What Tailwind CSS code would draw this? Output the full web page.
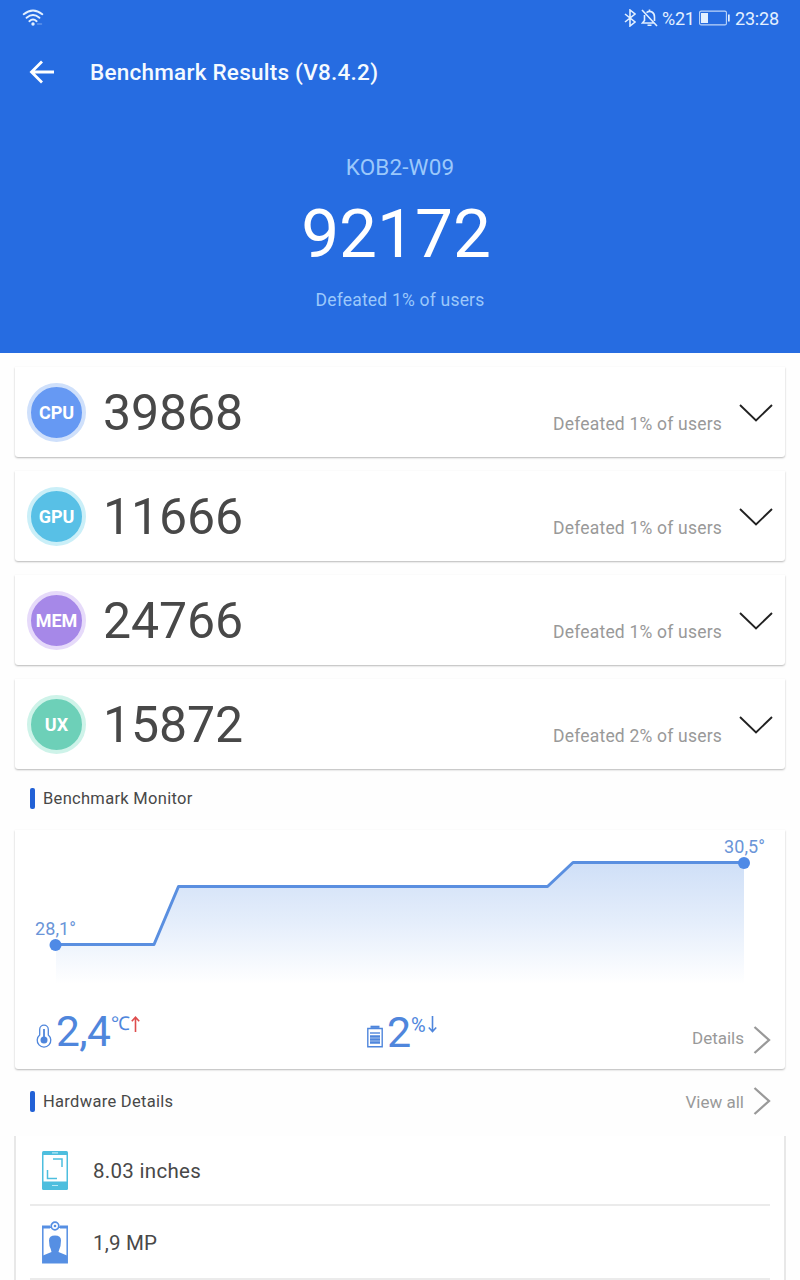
<!DOCTYPE html>
<html lang="en">
<head>
<meta charset="utf-8">
<title>Benchmark Results</title>
<script src="https://cdn.jsdelivr.net/npm/@tailwindcss/browser@4"></script>
</head>
<body class="w-[800px] h-[1280px] overflow-hidden bg-[#fefefe] font-['Roboto',sans-serif] text-[#484848]">
<header class="h-[353px] bg-[#266ce1] text-white flex flex-col">
  <div class="h-9 flex items-center justify-between pl-[22px] pr-[21px] text-[#e3f0ff]">
    <svg class="w-[22px] h-[18px]" viewBox="0 0 22 18" fill="none" stroke="currentColor" stroke-width="1.9" stroke-linecap="round"><path d="M1.700 5.200Q11 -2.400 20.300 5.200M4.600 8.800Q11 3.400 17.400 8.800M7.400 12.200Q11 9 14.600 12.200"/><circle cx="11" cy="15" r="1.700" fill="currentColor" stroke="none"/><path d="M15.500 15h4" stroke-width="1.500" opacity=".3"/></svg>
    <div class="flex items-center h-full text-[18px] leading-9">
      <svg class="w-[12px] h-[18px] mr-[5px]" viewBox="0 0 12 18" fill="none" stroke="currentColor" stroke-width="1.600"><path d="M1 5l10 8-5 4V1l5 4L1 13"/></svg>
      <svg class="w-[17px] h-[18px] mr-[4px]" viewBox="0 0 17 18" fill="none" stroke="currentColor" stroke-width="1.600"><path d="M1 1l15 16M5.500 3.600C9.500 .7 13.500 3.500 13.500 8v4M3.500 6v5.500L1.500 14h11.500M6.500 16.300h4M8.500 2.200V.5"/></svg>
      <span class="w-[32px] whitespace-nowrap pt-[2px] tracking-[-0.3px]">%21</span>
      <svg class="w-[31px] h-[16px] ml-[5px] mr-[5px]" viewBox="0 0 31 16"><rect x=".6" y="1.100" width="26.800" height="13.800" rx="1.500" fill="none" stroke="currentColor" stroke-width="1.100" opacity=".8"/><path d="M2 3h7v10H2z" fill="currentColor"/><path d="M29 4.500h1.700v7H29z" fill="currentColor"/></svg>
      <span class="w-[44px] whitespace-nowrap pt-[2px] tracking-[-0.2px]">23:28</span>
    </div>
  </div>
  <div class="h-[73px] flex items-center pl-[29px]">
    <svg class="-mt-[2px] w-[26px] h-[24px]" viewBox="0 0 26 24" fill="none" stroke="currentColor" stroke-width="2.800"><path d="M13 1.500L2.500 12 13 22.500M2.500 12H25"/></svg>
    <h1 class="ml-[35px] pt-px font-medium text-[22.500px] tracking-[0.240px] text-[#f4faff] whitespace-nowrap">Benchmark Results (V8.4.2)</h1>
  </div>
  <div class="flex flex-col items-center">
    <div class="mt-[43px] h-[30px] leading-[31px] text-[22.500px] tracking-[0.150px] text-[#9bc8fb]">KOB2-W09</div>
    <div class="mt-[12px] h-[80px] leading-[80px] text-[67.500px] -translate-x-1">92172</div>
    <div class="mt-[14px] h-6 leading-6 text-[17.500px] tracking-[0.200px] text-[#9bc8fb]">Defeated 1% of users</div>
  </div>
</header>
<main class="px-[15px]">
  <section class="pt-[14px] flex flex-col gap-[14px]">
    <div class="h-[90px] bg-white rounded-b-[3px] shadow-[0_1px_2px_rgba(0,0,0,0.28)] flex items-center pl-[12px] pr-[12px]">
      <div class="size-[59px] rounded-full border-[4.500px] border-[#cfe0fb] bg-[#6699f3] flex items-center justify-center text-white font-bold text-[18px]">CPU</div>
      <div class="ml-[17px] pt-[2px] text-[50px] tracking-[-0.100px] leading-none flex-1">39868</div>
      <div class="pt-[24px] text-[17.500px] tracking-[0.200px] text-[#999]">Defeated 1% of users</div>
      <svg class="ml-[17px] mt-[2px] w-[34px] h-[18px]" viewBox="0 0 34 18" fill="none" stroke="#222" stroke-width="1.900"><path d="M1 1l16 15.500L33 1"/></svg>
    </div>
    <div class="h-[90px] bg-white rounded-b-[3px] shadow-[0_1px_2px_rgba(0,0,0,0.28)] flex items-center pl-[12px] pr-[12px]">
      <div class="size-[59px] rounded-full border-[4.500px] border-[#caeff8] bg-[#58c0e6] flex items-center justify-center text-white font-bold text-[18px]">GPU</div>
      <div class="ml-[17px] pt-[2px] text-[50px] tracking-[-0.100px] leading-none flex-1">11666</div>
      <div class="pt-[24px] text-[17.500px] tracking-[0.200px] text-[#999]">Defeated 1% of users</div>
      <svg class="ml-[17px] mt-[2px] w-[34px] h-[18px]" viewBox="0 0 34 18" fill="none" stroke="#222" stroke-width="1.900"><path d="M1 1l16 15.500L33 1"/></svg>
    </div>
    <div class="h-[90px] bg-white rounded-b-[3px] shadow-[0_1px_2px_rgba(0,0,0,0.28)] flex items-center pl-[12px] pr-[12px]">
      <div class="size-[59px] rounded-full border-[4.500px] border-[#e6dafa] bg-[#a688e8] flex items-center justify-center text-white font-bold text-[18px]">MEM</div>
      <div class="ml-[17px] pt-[2px] text-[50px] tracking-[-0.100px] leading-none flex-1">24766</div>
      <div class="pt-[24px] text-[17.500px] tracking-[0.200px] text-[#999]">Defeated 1% of users</div>
      <svg class="ml-[17px] mt-[2px] w-[34px] h-[18px]" viewBox="0 0 34 18" fill="none" stroke="#222" stroke-width="1.900"><path d="M1 1l16 15.500L33 1"/></svg>
    </div>
    <div class="h-[90px] bg-white rounded-b-[3px] shadow-[0_1px_2px_rgba(0,0,0,0.28)] flex items-center pl-[12px] pr-[12px]">
      <div class="size-[59px] rounded-full border-[4.500px] border-[#cef3e9] bg-[#6dd0b8] flex items-center justify-center text-white font-bold text-[18px]">UX</div>
      <div class="ml-[17px] pt-[2px] text-[50px] tracking-[-0.100px] leading-none flex-1">15872</div>
      <div class="pt-[24px] text-[17.500px] tracking-[0.200px] text-[#999]">Defeated 2% of users</div>
      <svg class="ml-[17px] mt-[2px] w-[34px] h-[18px]" viewBox="0 0 34 18" fill="none" stroke="#222" stroke-width="1.900"><path d="M1 1l16 15.500L33 1"/></svg>
    </div>
  </section>
  <div class="h-[61px] flex items-center pl-[15px]">
    <div class="-mt-[2px] w-[5px] h-[21px] rounded-[2px] bg-[#2261d6]"></div>
    <h2 class="ml-[8px] text-[16.500px] tracking-[0.300px]">Benchmark Monitor</h2>
  </div>
  <section class="h-[239px] bg-white rounded-b-[3px] shadow-[0_1px_2px_rgba(0,0,0,0.28)]">
    <svg class="block w-[770px] h-[170px]" viewBox="15 830 770 170">
      <defs><linearGradient id="heat" gradientUnits="userSpaceOnUse" x1="0" y1="862" x2="0" y2="984"><stop offset="0" stop-color="#cfdff7"/><stop offset=".5" stop-color="#e5eefb"/><stop offset="1" stop-color="#fff"/></linearGradient></defs>
      <path d="M56 945H154L179 886.500H547.500L573 862.500H744V984H56Z" fill="url(#heat)"/>
      <path d="M56 944.500H154L178.500 886.500H547.500L573 862.500H744" fill="none" stroke="#5a8fe0" stroke-width="3" stroke-linejoin="round"/>
      <circle cx="55.500" cy="945" r="6" fill="#4f8ae6"/><circle cx="744" cy="863" r="6" fill="#4f8ae6"/>
      <g font-family="Roboto, sans-serif" font-size="18" fill="#6a95d8"><text x="35" y="935" textLength="41">28,1°</text><text x="724" y="853" textLength="41">30,5°</text></g>
    </svg>
    <div class="h-[69px] flex items-start pl-[21px] pr-[14px] text-[#4f86dc]">
      <svg class="mt-[24px] w-[16px] h-[24px]" viewBox="0 0 16 24" fill="none" stroke="currentColor" stroke-width="1.300"><path d="M3.700 11V5.500a4.300 4.300 0 0 1 8.600 0V11a6.800 6.800 0 1 1-8.600 0Z"/><circle cx="8" cy="16" r="3.500" fill="currentColor" stroke="none"/><path d="M8 5v10" stroke-width="1.800"/></svg>
      <span class="ml-[4px] mt-[7px] text-[42.500px] tracking-[-0.600px] leading-[50px] w-[55px] whitespace-nowrap">2,4</span>
      <span class="mt-[12px] text-[19px] leading-6 w-[20px] whitespace-nowrap">℃</span>
      <svg class="mt-[16px] w-[9px] h-[16px]" viewBox="0 0 9 16" fill="none" stroke="#de4c4c" stroke-width="1.600"><path d="M4.500 16V1.500M.8 5.300l3.700-4 3.700 4"/></svg>
      <svg class="ml-[227px] mt-[25px] w-[16px] h-[23px]" viewBox="0 0 16 23" fill="none" stroke="currentColor" stroke-width="1.400"><path d="M.8 3.500h14.400v18.300H.8Z"/><path d="M3.500 1.800h9" stroke-width="2.200"/><path d="M3 8h10"/><path d="M3 11.500h10M3 14.500h10M3 17.500h10" stroke-width="2.400"/></svg>
      <span class="ml-[4px] mt-[7px] text-[43px] leading-[50px] w-[24px]">2</span>
      <span class="mt-[13px] text-[20px] leading-6 w-[17px]">%</span>
      <svg class="mt-[16px] w-[9px] h-[17px]" viewBox="0 0 9 17" fill="none" stroke="currentColor" stroke-width="1.600"><path d="M4.500 0v15M.8 11.500l3.700 4 3.700-4"/></svg>
      <span class="ml-auto mt-[26px] text-[17px] leading-6 text-[#999]">Details</span>
      <svg class="ml-[9px] mt-[26px] w-[18px] h-[28px]" viewBox="0 0 18 28" fill="none" stroke="#999" stroke-width="2.300"><path d="M1.500 1l14.500 13-14.500 13"/></svg>
    </div>
  </section>
  <div class="h-[64px] flex items-center pl-[15px] pr-[14px]">
    <div class="w-[5px] h-[21px] rounded-[2px] bg-[#2261d6]"></div>
    <h2 class="ml-[8px] pt-[3px] text-[16.500px] tracking-[0.300px]">Hardware Details</h2>
    <span class="ml-auto pt-[3px] text-[17px] text-[#999]">View all</span>
    <svg class="ml-[9px] w-[18px] h-[28px]" viewBox="0 0 18 28" fill="none" stroke="#999" stroke-width="2.300"><path d="M1.500 1l14.500 13-14.500 13"/></svg>
  </div>
  <section class="mt-[3px] -mx-px h-[160px] bg-white border-x-2 border-[#e8e8e8] px-[14px]">
    <div class="h-[70px] flex items-center border-b-2 border-[#ebebeb] pl-[12px]">
      <svg class="w-[26px] h-[39px]" viewBox="0 0 26 39"><rect width="26" height="39" rx="1.500" fill="#4dbede"/><path d="M1.500 4h23v26.500h-23z" fill="#fff"/><path d="M11 8h9v8M5.500 19v8.500H15" fill="none" stroke="#4dbede" stroke-width="1.500"/><path d="M10 1.900h6M10 34.500h6" stroke="#b7e8f5" stroke-width="1.200"/></svg>
      <span class="ml-[25px] pt-[2px] text-[20.500px] tracking-[0.300px]">8.03 inches</span>
    </div>
    <div class="h-[74px] flex items-center border-b-2 border-[#ebebeb] pl-[12px]">
      <svg class="w-[26px] h-[43px]" viewBox="0 0 26 43"><path d="M.8 6.200h24.400v35.500H.8Z" fill="#fff" stroke="#568fe3" stroke-width="1.500"/><path d="M0 4.500h8v3H0zM18 4.500h8v3h-8z" fill="#568fe3"/><circle cx="13" cy="5" r="3.800" fill="#fff" stroke="#568fe3" stroke-width="1.700"/><circle cx="13" cy="5" r="1.300" fill="#568fe3"/><path d="M7 19.500Q7 14.500 13 14.500T19 19.500L18.500 25Q17 29 16.500 31L25 34.500V42H1V34.500L9.500 31Q9 28 7.500 25Z" fill="#568fe3"/></svg>
      <span class="ml-[25px] pt-[2px] text-[20.500px] tracking-[0.200px]">1,9 MP</span>
    </div>
  </section>
</main>
</body>
</html>
